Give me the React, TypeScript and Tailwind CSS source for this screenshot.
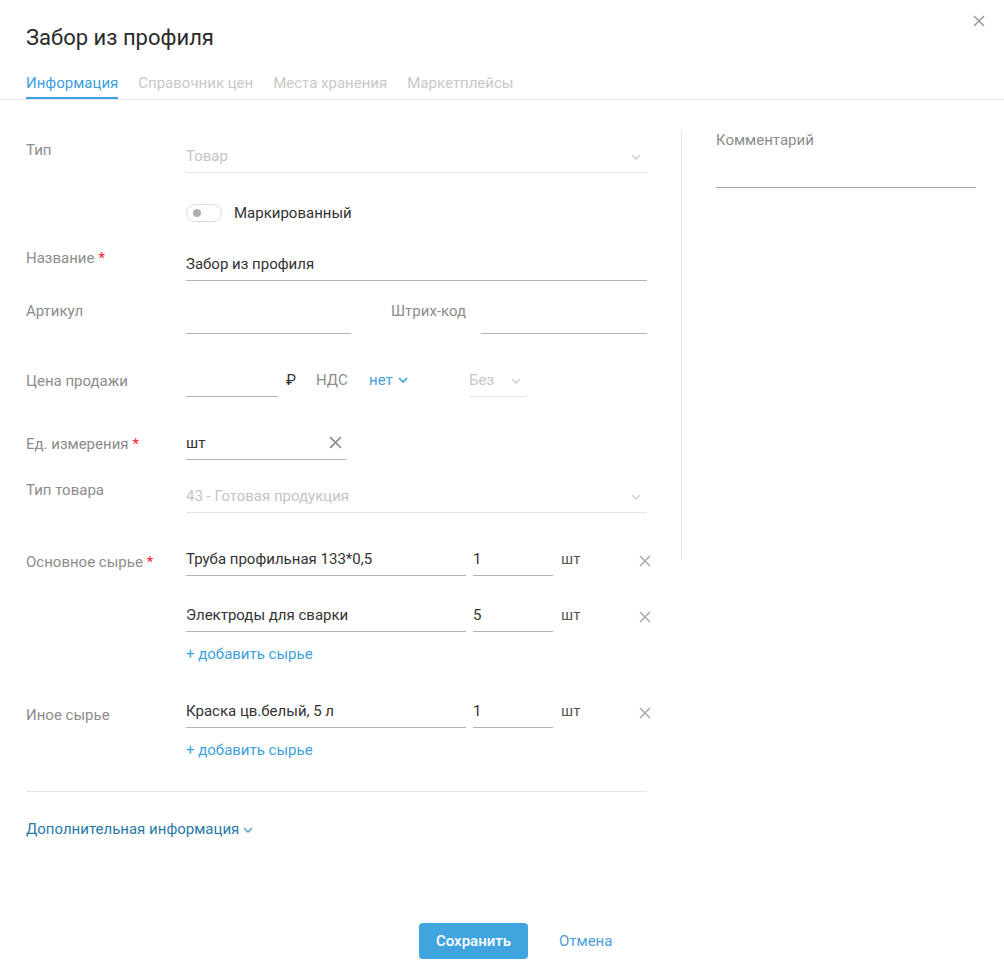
import React from 'react'

const TABS = ['Информация', 'Справочник цен', 'Места хранения', 'Маркетплейсы']

function Chevron({ className = '' }: { className?: string }) {
  return (
    <svg width="10" height="6" viewBox="0 0 10 6" className={className} fill="none">
      <path d="M1 1l4 4 4-4" stroke="currentColor" strokeWidth="1.6" />
    </svg>
  )
}

function Cross({ size = 12, className = '' }: { size?: number; className?: string }) {
  return (
    <svg width={size} height={size} viewBox="0 0 12 12" className={className} fill="none">
      <path d="M1 1l10 10M11 1L1 11" stroke="currentColor" strokeWidth="1.5" />
    </svg>
  )
}

function Label({ text, required, pt = '' }: { text: string; required?: boolean; pt?: string }) {
  return (
    <div className={`w-[160px] shrink-0 leading-5 text-[#8c8c8c] ${pt}`}>
      {text}
      {required && <span className="ml-1 text-[#f22]">*</span>}
    </div>
  )
}

function MaterialRow({ name, qty }: { name: string; qty: string }) {
  return (
    <div className="flex w-[465px] items-start">
      <div className="h-[33px] w-[280px] border-b border-[#b3b3b3] pt-[6px] leading-5 text-[#333]">{name}</div>
      <div className="ml-[7px] h-[33px] w-[80px] border-b border-[#b3b3b3] pt-[6px] leading-5 text-[#333]">{qty}</div>
      <div className="ml-[8px] pt-[6px] leading-5 text-[#555]">шт</div>
      <div className="ml-auto flex h-[33px] w-[12px] items-center justify-center pt-[2px] text-[#a8a8a8]">
        <Cross size={12} />
      </div>
    </div>
  )
}

export default function App() {
  return (
    <div className="relative min-h-[960px] bg-white text-[15px] text-[#333] font-['Roboto','Liberation_Sans',sans-serif]">
      <button className="absolute right-[19px] top-[15px] text-[#999]">
        <Cross size={12} />
      </button>

      {/* Header */}
      <div className="border-b border-[#e4e4e4] pl-[26px] pt-[22px]">
        <h1 className="text-[22px] leading-[32px] text-[#2b2b2b]">Забор из профиля</h1>
        <div className="mt-[19px] flex gap-[20px]">
          {TABS.map((t, i) => (
            <div
              key={t}
              className={
                i === 0
                  ? 'border-b-2 border-[#3d9fdb] pb-1 leading-5 text-[#3d9fdb]'
                  : 'border-b-2 border-transparent pb-1 leading-5 text-[#c8c8c8]'
              }
            >
              {t}
            </div>
          ))}
        </div>
      </div>

      {/* Body */}
      <div className="flex items-start pl-[26px]">
        <div className="w-[621px] shrink-0 pt-[40px]">
          {/* Тип */}
          <div className="flex items-start">
            <Label text="Тип" />
            <div className="flex h-[33px] flex-1 items-start justify-between border-b border-[#e6e6e6] pt-[6px] leading-5 text-[#c4c4c4]">
              <span>Товар</span>
              <Chevron className="mr-[6px] mt-[8px] text-[#d4d4d4]" />
            </div>
          </div>

          {/* Маркированный */}
          <div className="mt-[30px] flex h-[20px] items-center pl-[160px]">
            <div className="flex h-[18px] w-[36px] items-center rounded-full border border-[#dcdcdc] pl-[6px]">
              <div className="h-[8px] w-[8px] rounded-full bg-[#b0b0b0]" />
            </div>
            <span className="ml-[12px] text-[#333]">Маркированный</span>
          </div>

          {/* Название */}
          <div className="mt-[25px] flex items-start">
            <Label text="Название" required />
            <div className="h-[33px] flex-1 border-b border-[#b3b3b3] pt-[6px] leading-5 text-[#333]">Забор из профиля</div>
          </div>

          {/* Артикул */}
          <div className="mt-[20px] flex items-start">
            <Label text="Артикул" />
            <div className="h-[33px] w-[165px] border-b border-[#b3b3b3]" />
            <div className="ml-[40px] w-[90px] leading-5 text-[#8c8c8c]">Штрих-код</div>
            <div className="h-[33px] flex-1 border-b border-[#b3b3b3]" />
          </div>

          {/* Цена продажи */}
          <div className="mt-[30px] flex items-start">
            <Label text="Цена продажи" pt="pt-[7px]" />
            <div className="h-[33px] w-[92px] border-b border-[#b3b3b3]" />
            <span className="ml-[8px] w-[30px] pt-[6px] leading-5 text-[#333]">₽</span>
            <span className="w-[53px] pt-[6px] leading-5 text-[#8c8c8c]">НДС</span>
            <span className="flex w-[100px] items-center gap-[5px] pt-[6px] leading-5 text-[#3d9fdb]">
              нет
              <Chevron className="text-[#3d9fdb]" />
            </span>
            <div className="flex h-[33px] w-[57px] items-start justify-between border-b border-[#e6e6e6] pt-[6px] leading-5 text-[#c8c8c8]">
              <span>Без</span>
              <Chevron className="mr-[5px] mt-[8px] text-[#d4d4d4]" />
            </div>
          </div>

          {/* Ед. измерения */}
          <div className="mt-[30px] flex items-start">
            <Label text="Ед. измерения" required pt="pt-[7px]" />
            <div className="flex h-[33px] w-[160px] items-start justify-between border-b border-[#b3b3b3] pt-[6px] leading-5 text-[#333]">
              <span>шт</span>
              <Cross size={13} className="mr-[4px] mt-[3px] text-[#8f8f8f]" />
            </div>
          </div>

          {/* Тип товара */}
          <div className="mt-[20px] flex items-start">
            <Label text="Тип товара" />
            <div className="flex h-[33px] flex-1 items-start justify-between border-b border-[#e6e6e6] pt-[6px] leading-5 text-[#c4c4c4]">
              <span>43 - Готовая продукция</span>
              <Chevron className="mr-[6px] mt-[8px] text-[#d4d4d4]" />
            </div>
          </div>

          {/* Основное сырье */}
          <div className="mt-[30px] flex items-start">
            <Label text="Основное сырье" required pt="pt-[9px]" />
            <div className="flex-1">
              <MaterialRow name="Труба профильная 133*0,5" qty="1" />
              <div className="mt-[23px]">
                <MaterialRow name="Электроды для сварки" qty="5" />
              </div>
              <div className="mt-[12px] leading-5 text-[#3d9fdb]">+ добавить сырье</div>
            </div>
          </div>

          {/* Иное сырье */}
          <div className="mt-[31px] flex items-start">
            <Label text="Иное сырье" pt="pt-[10px]" />
            <div className="flex-1">
              <MaterialRow name="Краска цв.белый, 5 л" qty="1" />
              <div className="mt-[12px] leading-5 text-[#3d9fdb]">+ добавить сырье</div>
            </div>
          </div>

          <div className="mt-[31px] border-t border-[#e4e4e4]" />

          <div className="mt-[27px] flex items-center gap-[4px] leading-5 text-[#2a7aa6]">
            Дополнительная информация
            <Chevron className="mt-[2px] text-[#5aa5c8]" />
          </div>
        </div>

        {/* Right column */}
        <div className="ml-[34px] mt-[30px] h-[430px] w-[295px] border-l border-[#e4e4e4] pl-[34px]">
          <div className="leading-5 text-[#8c8c8c]">Комментарий</div>
          <div className="mt-[17px] h-[21px] w-[260px] border-b border-[#a8a8a8]" />
        </div>
      </div>

      {/* Footer */}
      <div className="mt-[84px] flex items-center pl-[419px]">
        <button className="h-[36px] w-[109px] rounded-[4px] bg-[#40a4df] font-medium text-white">Сохранить</button>
        <button className="ml-[31px] text-[#4aa0dc]">Отмена</button>
      </div>
    </div>
  )
}
